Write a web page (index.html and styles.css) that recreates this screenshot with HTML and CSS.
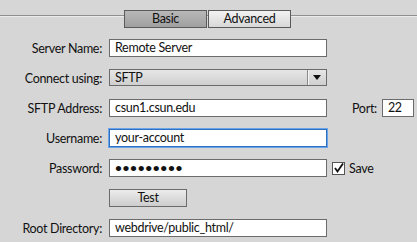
FILE: index.html
```html
<!DOCTYPE html>
<html>
<head>
    <title>Server Setup</title>
    <link rel="stylesheet" href="styles.css">
</head>
<body>

    <!-- Tab bar -->
    <div class="tabbar">
        <div class="tabs">
            <div class="tab active">Basic</div>
            <div class="tab">Advanced</div>
        </div>
    </div>

    <div class="form">
        <div class="row">
            <label class="lbl">Server Name:</label>
            <div class="field">Remote Server</div>
        </div>

        <div class="row">
            <label class="lbl">Connect using:</label>
            <div class="select">
                <span class="select-text">SFTP</span>
                <span class="select-arrow">
                    <svg width="8" height="5" viewBox="0 0 8 5"><path d="M0 0 L8 0 L4 5 Z" fill="#111"/></svg>
                </span>
            </div>
        </div>

        <div class="row">
            <label class="lbl">SFTP Address:</label>
            <div class="field">csun1.csun.edu</div>
            <label class="port-lbl">Port:</label>
            <div class="field port">22</div>
        </div>

        <div class="row">
            <label class="lbl">Username:</label>
            <div class="field focused">your-account</div>
        </div>

        <div class="row">
            <label class="lbl">Password:</label>
            <div class="field dots">&bull;&bull;&bull;&bull;&bull;&bull;&bull;&bull;&bull;</div>
            <span class="check">
                <svg width="11" height="11" viewBox="0 0 11 11"><path d="M2 5 L4.5 8.5 L10 0.5" fill="none" stroke="#111" stroke-width="1.8"/></svg>
            </span>
            <span class="save">Save</span>
        </div>

        <div class="row">
            <span class="lbl"></span>
            <div class="button">Test</div>
        </div>

        <div class="row">
            <label class="lbl">Root Directory:</label>
            <div class="field">webdrive/public_html/</div>
        </div>
    </div>

</body>
</html>
```

FILE: styles.css
```css
body {
    margin: 0;
    padding: 0;
    background: #d6d6d6;
    font-family: Lato, "Open Sans", Arial, sans-serif;
    font-size: 12.5px;
    letter-spacing: -0.3px;
    color: #111;
    width: 417px;
    height: 242px;
    overflow: hidden;
}

.tabbar {
    position: relative;
    height: 39px;
}

.tabbar::before {
    content: "";
    position: absolute;
    left: 0;
    right: 0;
    top: 15px;
    height: 1px;
    background: #8f8f8f;
    border-bottom: 1px solid #ececec;
}

.tabs {
    position: absolute;
    left: 124px;
    top: 10px;
    display: flex;
    gap: 1px;
}

.tab {
    width: 81px;
    height: 16px;
    line-height: 16px;
    text-align: center;
    border: 1px solid #5a5a5a;
    background: linear-gradient(#f2f2f2, #d8d8d8);
}

.tab.active {
    background: linear-gradient(#b8b8b8, #a0a0a0);
}

.form {
    display: flex;
    flex-direction: column;
    gap: 12px;
}

.row {
    display: flex;
    align-items: center;
    height: 18px;
}

.lbl {
    width: 102px;
    margin-right: 7px;
    text-align: right;
    flex-shrink: 0;
}

.field {
    width: 211px;
    height: 16px;
    line-height: 16px;
    padding-left: 5px;
    background: #fff;
    border: 1px solid #6b6b6b;
    white-space: nowrap;
    overflow: hidden;
}

.field.focused {
    border-color: #2f6fc4;
    box-shadow: 0 0 0 1px #6aa3e6;
}

.field.dots {
    font-size: 12px;
    font-weight: bold;
    letter-spacing: 0.6px;
}

.field.port {
    width: 25px;
}

.port-lbl {
    margin-left: 25px;
    margin-right: 5px;
}

.select {
    width: 216px;
    height: 15px;
    margin-top: -2px;
    display: flex;
    align-items: center;
    background: linear-gradient(#e6e6e6, #cfcfcf);
    border: 1px solid #6b6b6b;
}

.select-text {
    flex: 1;
    padding-left: 5px;
}

.select-arrow {
    width: 18px;
    height: 15px;
    display: flex;
    align-items: center;
    justify-content: center;
    border-left: 1px solid #8a8a8a;
    box-shadow: inset 1px 0 0 #f4f4f4;
}

.check {
    width: 11px;
    height: 11px;
    margin-left: 5px;
    background: #fff;
    border: 1px solid #555;
    display: flex;
}

.save {
    margin-left: 4px;
}

.button {
    width: 76px;
    height: 16px;
    line-height: 16px;
    text-align: center;
    background: linear-gradient(#ececec, #cdcdcd);
    border: 1px solid #6b6b6b;
}
```
